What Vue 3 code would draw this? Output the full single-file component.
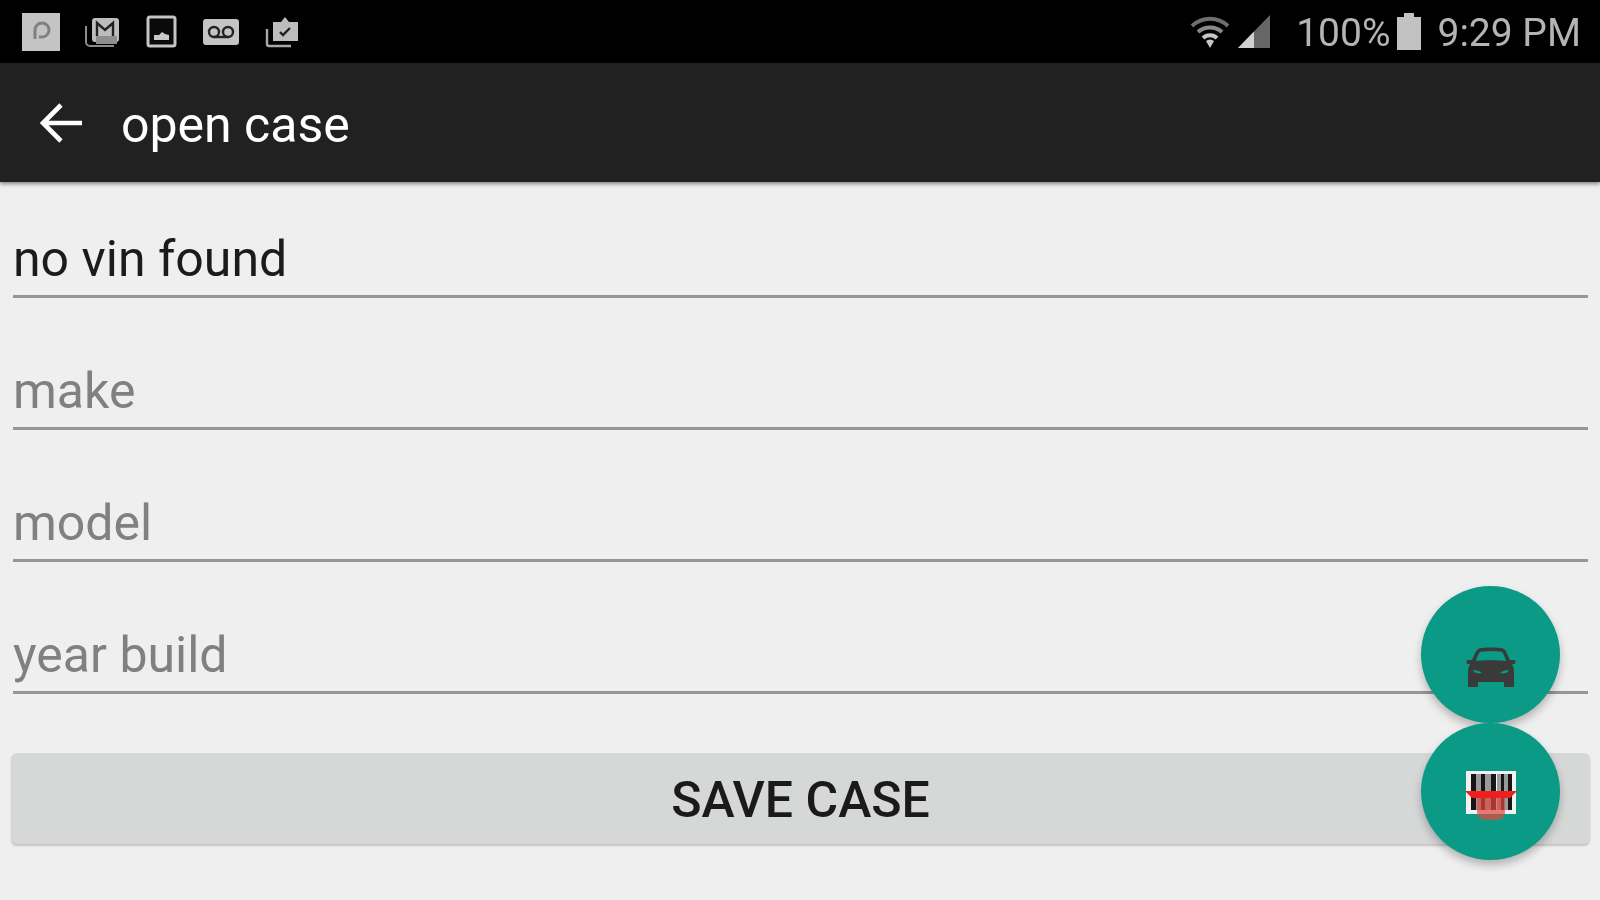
<script setup>
const fields = [
  { text: 'no vin found', filled: true },
  { text: 'make', filled: false },
  { text: 'model', filled: false },
  { text: 'year build', filled: false },
]
</script>

<template>
  <div class="screen">
    <header class="status">
      <div class="status-left">
        <span class="note-box">
          <svg width="38" height="38" viewBox="0 0 38 38"><path d="M13 26V17a7 7 0 1 1 7 7h-3" fill="none" stroke="#808080" stroke-width="3"/></svg>
        </span>
        <svg class="n1" width="36" height="32" viewBox="0 0 36 32">
          <path d="M2 10v16a4 4 0 0 0 4 4h24" fill="none" stroke="#8c8c8c" stroke-width="2"/>
          <rect x="8" y="2" width="27" height="24" rx="3" fill="#bdbdbd"/>
          <path d="M13 20V7l8 7 8-7v13" fill="none" stroke="#222" stroke-width="2.4"/>
          <rect x="12" y="20" width="21" height="8" fill="#8e8e8e"/>
        </svg>
        <svg class="n2" width="31" height="33" viewBox="0 0 31 33">
          <rect x="2" y="2" width="27" height="29" rx="2" fill="#0a0a0a" stroke="#c4c4c4" stroke-width="3"/>
          <path d="M8 25v-5h5l3-3 3 2 4 1v5z" fill="#c8c8c8"/>
        </svg>
        <svg class="n3" width="36" height="26" viewBox="0 0 36 26">
          <rect width="36" height="26" rx="3" fill="#c4c4c4"/>
          <circle cx="11" cy="13" r="5" fill="none" stroke="#222" stroke-width="2.4"/>
          <circle cx="25" cy="13" r="5" fill="none" stroke="#222" stroke-width="2.4"/>
          <path d="M11 18h14" stroke="#222" stroke-width="2.4"/>
        </svg>
        <svg class="n4" width="34" height="33" viewBox="0 0 34 33">
          <path d="M2 14v15a2 2 0 0 0 2 2h22" fill="none" stroke="#a8a8a8" stroke-width="2.4"/>
          <path d="M8 7h8l4-5 4 5h9v19H8z" fill="#bdbdbd"/>
          <path d="M15 17l3 3 7-7" fill="none" stroke="#222" stroke-width="2.4"/>
        </svg>
      </div>
      <div class="status-right">
        <svg class="wifi" width="40" height="36" viewBox="0 0 40 36">
          <path d="M2 12a26 26 0 0 1 36 0" fill="none" stroke="#6e6e6e" stroke-width="4"/>
          <path d="M8 18a18 18 0 0 1 24 0" fill="none" stroke="#8a8a8a" stroke-width="4"/>
          <path d="M13 24a10 10 0 0 1 14 0" fill="none" stroke="#c8c8c8" stroke-width="4"/>
          <path d="M16 27a6 6 0 0 1 8 0l-4 7z" fill="#c8c8c8"/>
        </svg>
        <svg class="signal" width="32" height="33" viewBox="0 0 32 33">
          <path d="M0 33 32 0v33z" fill="#666"/>
          <path d="M0 33 16 16.500v16.500z" fill="#d0d0d0"/>
        </svg>
        <span class="pct">100%</span>
        <svg class="batt" width="24" height="37" viewBox="0 0 24 37">
          <path d="M0 4h7V0h10v4h7v33H0z" fill="#c2c2c2"/>
        </svg>
        <span class="clock">9:29 PM</span>
      </div>
    </header>

    <div class="toolbar">
      <svg class="back" width="44" height="44" viewBox="0 0 44 44">
        <path d="M42 22H4M21 4 3 22l18 18" fill="none" stroke="#fff" stroke-width="4.600"/>
      </svg>
      <span class="title">open case</span>
    </div>

    <main class="form">
      <div v-for="f in fields" :key="f.text" class="field" :class="{ filled: f.filled }">{{ f.text }}</div>
      <button class="save">SAVE CASE</button>
    </main>

    <div class="fabs">
      <div class="fab">
        <svg width="50" height="42" viewBox="0 0 50 42">
          <path fill="#3a3a3a" d="M12 3C14 1 36 1 38 3c2 1 5 9 6 11h4c2 0 2 4 0 4h-2c1 2 2 5 2 8v15H38v-5H12v5H2V26c0-3 1-6 2-8H2c-2 0-2-4 0-4h4C7 12 10 4 12 3z"/>
          <path fill="#0a9a86" d="M14 6c3-1 19-1 22 0 1 1 4 7 4 9-6-1-24-1-30 0 0-2 3-8 4-9zM7 24c3 0 7 1 9 3-4 1-8 0-9-3zM43 24c-3 0-7 1-9 3 4 1 8 0 9-3z"/>
        </svg>
      </div>
      <div class="fab">
        <svg width="52" height="50" viewBox="0 0 52 50">
          <rect x="1" y="0" width="50" height="43" fill="#f2f2f2"/>
          <path d="M11 3h5v36h-5zM20 3h6v36h-6zM32 3h4v36h-4zM39 3h4v36h-4z" fill="#9a9a9a"/>
          <path d="M6 3h5v36H6zM16 3h4v36h-4zM26 3h5v36h-5zM36 3h3v36h-3zM43 3h4v36h-4z" fill="#161616"/>
          <path d="M12 26h28v15a8 8 0 0 1-8 8H20a8 8 0 0 1-8-8z" fill="#e2473f" opacity=".7"/>
          <path d="M0 20h52l-7 7H7z" fill="#f01f1f"/>
        </svg>
      </div>
    </div>
  </div>
</template>

<style>
html, body { margin: 0; background: #efefef; }
</style>

<style scoped>
.screen {
  position: relative;
  width: 1600px;
  height: 900px;
  overflow: hidden;
  background: #efefef;
  font-family: Roboto, "Liberation Sans", sans-serif;
  display: flex;
  flex-direction: column;
  filter: blur(0.6px);
}
.status {
  height: 63px;
  background: #000;
  display: flex;
  justify-content: space-between;
  align-items: center;
  padding: 0 19px 0 22px;
  flex: none;
}
.status-left, .status-right { display: flex; align-items: center; }
.note-box {
  width: 38px;
  height: 38px;
  background: #c4c4c4;
  display: block;
}
.note-box svg { display: block; }
.n1 { margin-left: 24px; }
.n2 { margin-left: 26px; }
.n3 { margin-left: 26px; }
.n4 { margin-left: 26px; }
.signal { margin-left: 8px; }
.pct, .clock {
  font-size: 39px;
  color: #b4b4b4;
  line-height: 1;
  padding-top: 4px;
}
.pct { margin-left: 26px; }
.batt { margin-left: 7px; }
.clock { margin-left: 16px; }
.toolbar {
  height: 119px;
  background: #212121;
  flex: none;
  display: flex;
  align-items: center;
  padding-left: 40px;
  box-shadow: 0 2px 4px rgba(0, 0, 0, .45);
  position: relative;
}
.back { margin-right: 37px; }
.title {
  color: #fff;
  font-size: 50px;
  line-height: 1;
  padding-top: 5px;
}
.form {
  display: flex;
  flex-direction: column;
  padding: 0 10px 0 11px;
  flex: 1;
}
.field {
  height: 115.500px;
  margin: 0 2px;
  box-sizing: border-box;
  border-bottom: 3px solid #969696;
  font-size: 50px;
  color: #808080;
  display: flex;
  align-items: flex-end;
  padding-bottom: 7px;
}
.field + .field { height: 132px; }
.field.filled { color: #1b1b1b; }
.save {
  margin-top: 59px;
  height: 91px;
  border: 0;
  border-radius: 6px;
  background: #d6d8d7;
  box-shadow: 0 2px 2px rgba(0, 0, 0, .18);
  font-family: inherit;
  font-size: 50px;
  font-weight: 500;
  color: #1a1a1a;
  padding: 4px 0 0;
}
.fabs {
  position: absolute;
  left: 1421px;
  top: 586px;
  display: flex;
  flex-direction: column;
}
.fab {
  width: 139px;
  height: 137px;
  border-radius: 50%;
  background: #0a9a86;
  box-shadow: 0 5px 8px rgba(0, 0, 0, .25);
  display: flex;
  align-items: center;
  justify-content: center;
}
.fab svg { display: block; margin-top: 24px; }
.fab + .fab svg { margin-top: 8px; }
</style>
